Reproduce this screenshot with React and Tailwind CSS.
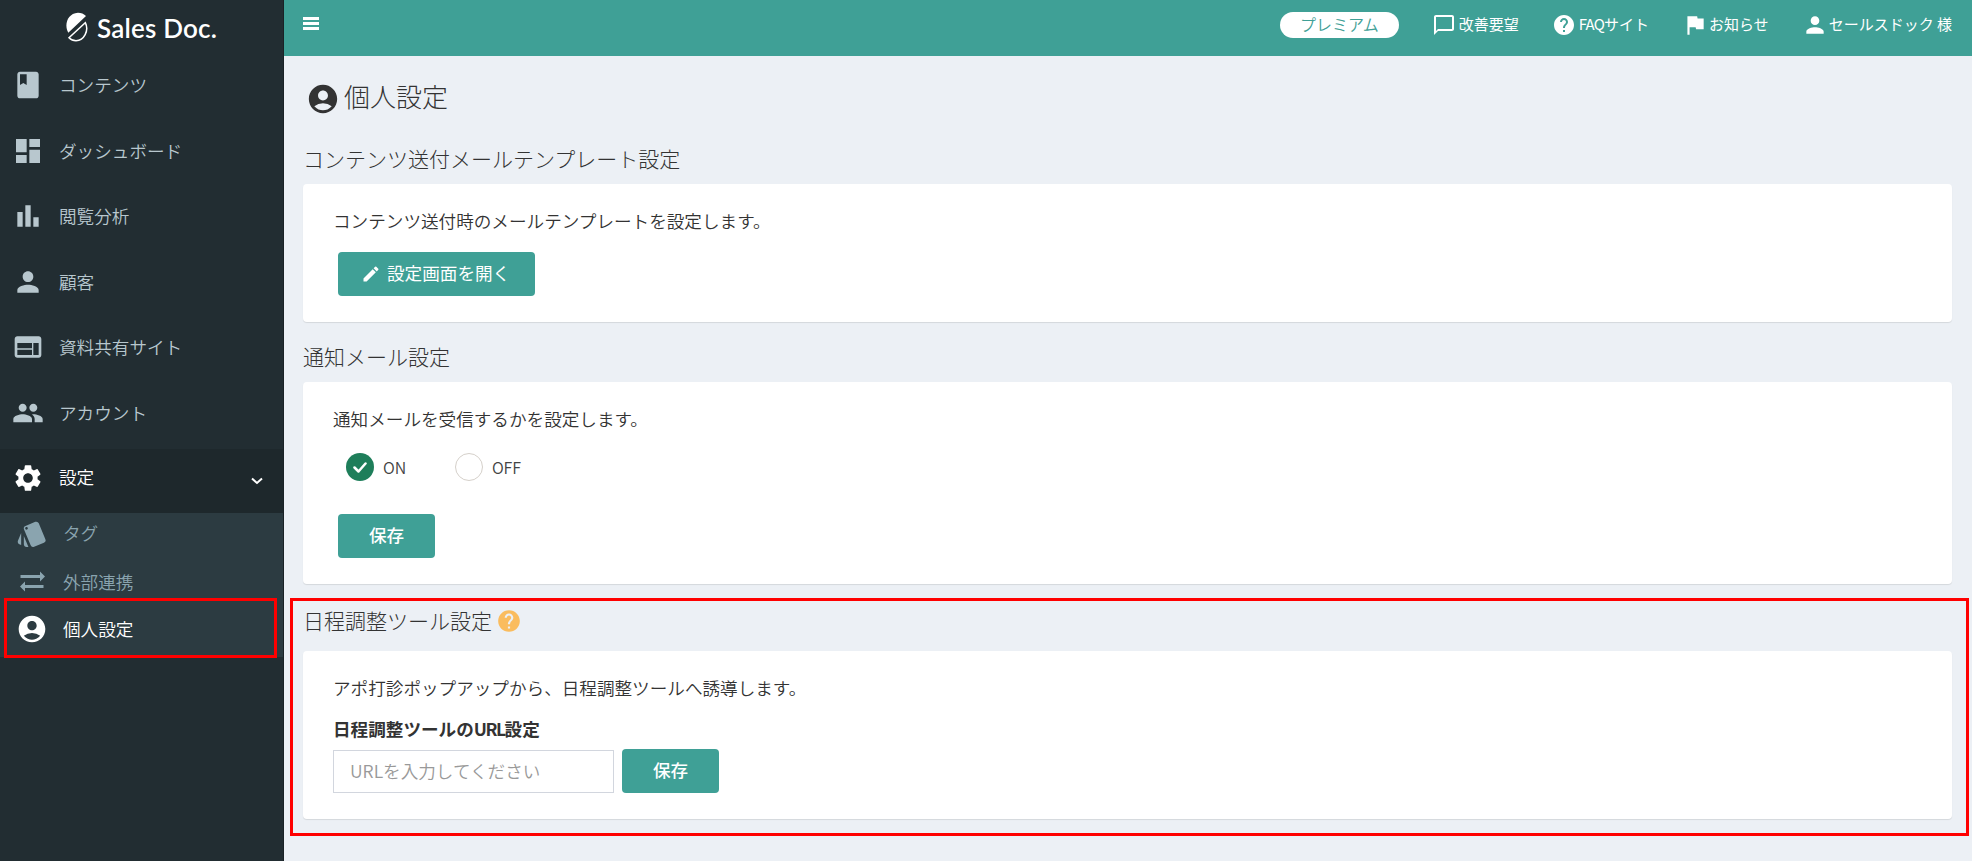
import {
  MdBook, MdDashboard, MdBarChart, MdPerson, MdWeb, MdPeople, MdSettings, MdStyle,
  MdAccountCircle, MdChatBubbleOutline, MdHelp, MdFlag, MdEdit,
} from 'react-icons/md'

const NAV_ITEMS = [
  { label: 'コンテンツ', icon: MdBook },
  { label: 'ダッシュボード', icon: MdDashboard },
  { label: '閲覧分析', icon: MdBarChart },
  { label: '顧客', icon: MdPerson },
  { label: '資料共有サイト', icon: MdWeb },
  { label: 'アカウント', icon: MdPeople },
]

function ExchangeIcon({ className }) {
  return (
    <svg viewBox="0 0 32 32" className={className} fill="currentColor">
      <path d="M4.500 9h19.500V5.500l5 5l-5 5V12h-19.500zM27.500 19H9v-3.500l-5 5l5 5V22h18.500z" />
    </svg>
  )
}

function Logo() {
  return (
    <div className="flex h-14 items-center pb-0.5 pl-[65px]">
      <svg viewBox="0 0 24 30" className="h-[30px] w-6">
        <path d="M3.300 20.700C-1 13 2 1.500 13 0.700c3 0 6 1.200 8 3.300z" fill="#fff" />
        <path d="M20.300 10.700c4 8 -1.300 18 -9.300 18c-3 0 -5 -1 -7 -3z" fill="none" stroke="#fff" strokeWidth="1.500" />
      </svg>
      <span className="mt-0.5 ml-2 font-['Lato',sans-serif] text-[26px] leading-none font-semibold tracking-[0.2px] text-white">
        Sales Doc.
      </span>
    </div>
  )
}

function Sidebar() {
  return (
    <aside className="relative flex w-[284px] shrink-0 flex-col border-r border-[#1a2226] bg-[#222d32] text-[17.6px] text-[#b8c7ce]">
      <Logo />
      {NAV_ITEMS.map(({ label, icon: Icon }) => (
        <a key={label} className="flex h-[65.5px] items-center pb-[7px] pl-3">
          <Icon className="size-8" />
          <span className="ml-[15px]">{label}</span>
        </a>
      ))}
      <a className="flex h-[64px] items-center bg-[#1e282c] pb-[7px] pl-3 text-white">
        <MdSettings className="size-8" />
        <span className="ml-[15px]">設定</span>
        <svg viewBox="0 0 12 8" className="mt-1.5 mr-[20px] ml-auto h-2 w-3" fill="none" stroke="currentColor" strokeWidth="2">
          <path d="M1 1.500l5 4.500l5 -4.500" />
        </svg>
      </a>
      <div className="bg-[#2c3b41] text-[#8aa4af]">
        <a className="flex h-[45px] items-center pb-1 pl-4">
          <MdStyle className="size-8" />
          <span className="ml-[15px]">タグ</span>
        </a>
        <a className="flex h-12 items-center pl-4">
          <ExchangeIcon className="size-8" />
          <span className="ml-[15px]">外部連携</span>
        </a>
        <a className="flex h-[51px] items-center pb-[5px] pl-4 text-white">
          <MdAccountCircle className="size-8" />
          <span className="mt-px ml-[15px]">個人設定</span>
        </a>
      </div>
      {/* highlight frame around the active item */}
      <div className="absolute top-[598px] left-1 h-[60px] w-[273px] border-3 border-[#ff0000]" />
    </aside>
  )
}

function TopBar() {
  return (
    <header className="flex h-14 items-start bg-[#3fa096] text-[15px] text-white">
      <div className="mt-[17px] ml-[19px] flex w-4 flex-col gap-[2px]">
        <span className="h-[3px] bg-white" />
        <span className="h-[3px] bg-white" />
        <span className="h-[3px] bg-white" />
      </div>
      <div className="ml-auto flex h-[49px] items-center gap-[33px] pr-5 font-normal">
        <span className="flex h-[26px] w-[119px] items-center justify-center rounded-full bg-white pb-0.5 text-[16px] font-[350] text-[#3fa096]">プレミアム</span>
        <span className="flex items-center gap-[3px]"><MdChatBubbleOutline className="size-6" />改善要望</span>
        <span className="flex items-center gap-[3px]">
          <MdHelp className="size-6" />
          <span><span className="tracking-[-0.9px]">FAQ</span>サイト</span>
        </span>
        <span className="flex items-center gap-px"><MdFlag className="size-[26px]" />お知らせ</span>
        <span className="flex items-center gap-px"><MdPerson className="size-[26px]" />セールスドック 様</span>
      </div>
    </header>
  )
}

function SectionTitle({ className, children }) {
  return <h2 className={`flex h-[30px] items-center text-[21px] font-light ${className}`}>{children}</h2>
}

function Card({ className, children }) {
  return (
    <section className={`flex flex-col items-start rounded-[4px] bg-white pl-[30px] leading-[25px] shadow-[0_1px_1px_rgba(0,0,0,0.1)] ${className}`}>
      {children}
    </section>
  )
}

function SaveButton({ className = '' }) {
  return (
    <button className={`h-11 w-[97px] rounded-[4px] bg-[#3fa096] pb-[3px] font-medium text-white ${className}`}>保存</button>
  )
}

export default function App() {
  return (
    <div lang="ja" className="relative flex h-[861px] w-[1972px] overflow-hidden bg-[#ecf0f5] font-['Noto_Sans_CJK_JP',sans-serif] font-[350] text-[#333]">
      <Sidebar />
      <div className="flex flex-1 flex-col">
        <TopBar />
        <main className="flex flex-col pr-5 pl-[19px] text-[17.6px]">
          <h1 className="mt-6 flex h-9 items-center pl-[3px] text-[26px] font-light">
            <MdAccountCircle className="mt-px size-[34px]" />
            <span className="mb-[5px] ml-1">個人設定</span>
          </h1>

          <SectionTitle className="mt-[28px]">コンテンツ送付メールテンプレート設定</SectionTitle>
          <Card className="mt-[10px] h-[138px] pt-6">
            <p>コンテンツ送付時のメールテンプレートを設定します。</p>
            <button className="mt-[19px] ml-[5px] flex h-11 w-[197px] items-center rounded-[4px] bg-[#3fa096] pl-[23px] font-normal text-white">
              <MdEdit className="size-5" />
              <span className="mb-[3px] ml-[6px]">設定画面を開く</span>
            </button>
          </Card>

          <SectionTitle className="mt-5">通知メール設定</SectionTitle>
          <Card className="mt-[10px] h-[202px] pt-6">
            <p>通知メールを受信するかを設定します。</p>
            <div className="mt-[22px] ml-[13px] flex h-7 items-center text-[16px] text-[#444]">
              <span className="flex size-7 items-center justify-center rounded-full bg-[#1e7e5a]">
                <svg viewBox="0 0 14 11" className="h-[11px] w-3.5" fill="none" stroke="#fff" strokeWidth="2.500" strokeLinecap="round" strokeLinejoin="round">
                  <path d="M1.500 5.500l4 4l7 -8" />
                </svg>
              </span>
              <span className="ml-[9px] w-[72px]">ON</span>
              <span className="size-7 rounded-full border border-[#d5d0ca] bg-white" />
              <span className="ml-[9px] tracking-[-0.2px]">OFF</span>
            </div>
            <SaveButton className="mt-[33px] ml-[5px]" />
          </Card>

          <SectionTitle className="mt-[22px]">
            日程調整ツール設定
            <MdHelp className="ml-1 size-[26px] text-[#fabc5e]" />
          </SectionTitle>
          <Card className="mt-[15px] h-[168px] pt-6">
            <p>アポ打診ポップアップから、日程調整ツールへ誘導します。</p>
            <label className="mt-4 font-bold">
              日程調整ツールの<span className="tracking-[-1.5px]">URL</span>設定
            </label>
            <div className="mt-[8px] flex items-end gap-2">
              <input
                type="text"
                placeholder="URLを入力してください"
                className="h-[43px] w-[281px] border border-[#d2d6de] bg-white px-4 pb-[3px] placeholder:text-[#999]"
              />
              <SaveButton />
            </div>
          </Card>
        </main>
      </div>
      <div className="absolute top-[598px] left-[290px] h-[238px] w-[1679px] border-3 border-[#ff0000]" />
    </div>
  )
}
